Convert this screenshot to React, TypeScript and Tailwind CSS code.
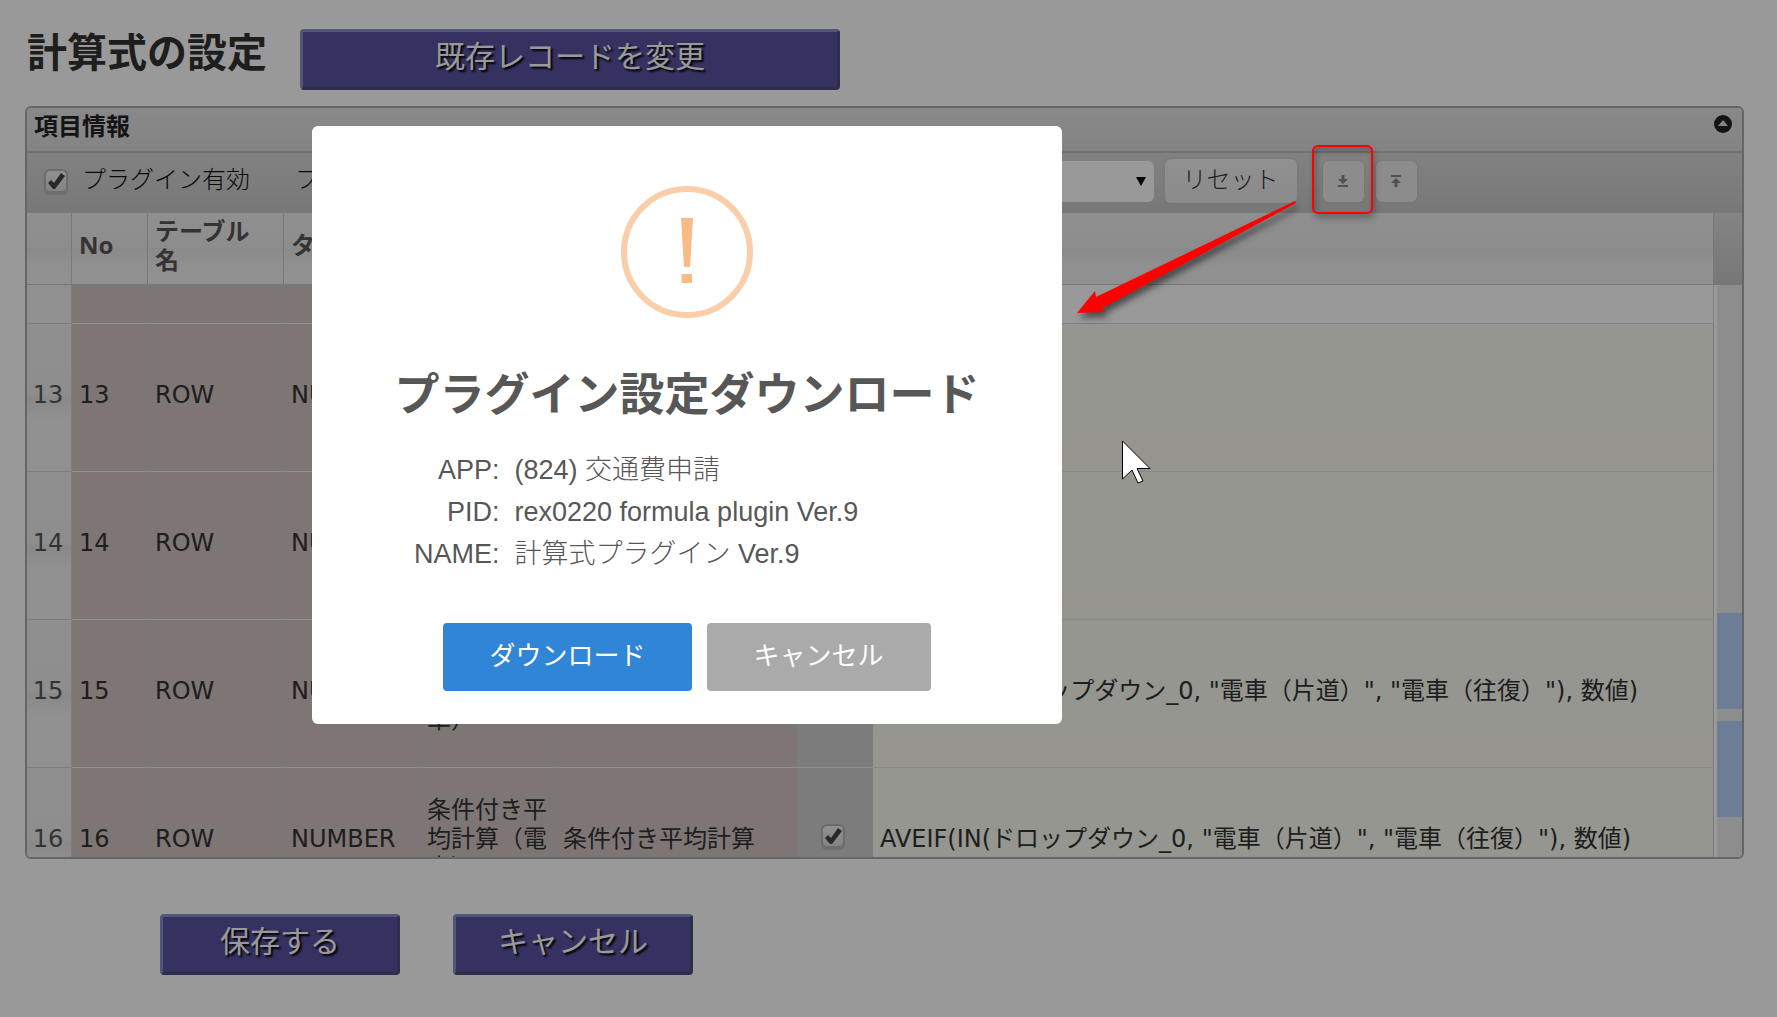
import { ReactNode } from "react";
import { clsx } from "clsx";

type Row = {
    no: number;
    table: string;
    type: string;
    name: string;
    label: string;
    formula: string;
};

const rows: Row[] = [
    { no: 13, table: "ROW", type: "NUMBER", name: "", label: "", formula: "" },
    { no: 14, table: "ROW", type: "NUMBER", name: "", label: "", formula: "" },
    {
        no: 15,
        table: "ROW",
        type: "NUMBER",
        name: "条件付き合計計算（電車）",
        label: "",
        formula: 'SUMIF(IN(ドロップダウン_0, "電車（片道）", "電車（往復）"), 数値)',
    },
    {
        no: 16,
        table: "ROW",
        type: "NUMBER",
        name: "条件付き平均計算（電車）",
        label: "条件付き平均計算",
        formula: 'AVEIF(IN(ドロップダウン_0, "電車（片道）", "電車（往復）"), 数値)',
    },
];

const columns = ["", "No", "テーブル名", "タイプ", "", "", "", ""];

const details = [
    ["APP:", "(824) 交通費申請"],
    ["PID:", "rex0220 formula plugin Ver.9"],
    ["NAME:", "計算式プラグイン Ver.9"],
];

function PrimaryButton({ children, className }: { children: ReactNode; className?: string }) {
    return (
        <button
            className={clsx(
                "h-[61px] rounded border-3 border-t-[#858fc6] border-l-[#858fc6] border-r-[#4e4e7b] border-b-[#4e4e7b] bg-[#5952a2] pb-2 text-3xl font-normal text-white [text-shadow:2px_2px_2px_#000]",
                className
            )}
        >
            {children}
        </button>
    );
}

function Check({ id, label }: { id: string; label?: string }) {
    return (
        <span className="relative block h-6 w-6">
            <input
                id={id}
                type="checkbox"
                defaultChecked
                aria-label={label}
                className="block h-6 w-6 appearance-none rounded-md border-2 border-[#b4b4b4] bg-gradient-to-b from-[#f0f0f0] to-[#dcdcdc] shadow-[0_2px_1px_#b8b8b8]"
            />
            <svg viewBox="0 0 24 24" className="pointer-events-none absolute inset-0">
                <path d="M4 14l3-3 3 3 7-10 4 3-10 13h-2z" fill="#444" />
            </svg>
        </span>
    );
}

function TransferIcon({ up }: { up?: boolean }) {
    return (
        <svg viewBox="0 0 12 14" className="h-3.5 w-3" fill="#888">
            {up ? (
                <path d="M1 1h10v2H1zM6 4l5 5H7.500v4h-3V9H1z" />
            ) : (
                <path d="M1 11h10v2H1zM6 10l5-5H7.500V1h-3v4H1z" />
            )}
        </svg>
    );
}

function Toolbar() {
    return (
        <div className="flex h-15 items-center bg-gradient-to-b from-[#d8d8d8] to-[#c8c8c8] pb-1 pl-[17px] whitespace-nowrap">
            <Check id="enabled" />
            <label htmlFor="enabled" className="ml-3.5 pb-1 text-[#111]">プラグイン有効</label>
            <label htmlFor="field" className="ml-[45px] pb-1 text-[#111]">フィールド</label>
            <div className="relative ml-4 w-[723px]">
                <select
                    id="field"
                    className="block h-[41px] w-full appearance-none rounded-md bg-white px-2"
                >
                    <option value=""></option>
                </select>
                <svg viewBox="0 0 10 9" className="pointer-events-none absolute top-4 right-2 h-[9px] w-[10px]">
                    <path d="M0 0h10L5 9z" fill="#000" />
                </svg>
            </div>
            <button className="ml-[11px] h-11 w-[132px] rounded-md bg-gradient-to-b from-[#f0f0f0] to-[#e8e8e8] pb-1 text-[#333] shadow-[0_0_3px_#bbb]">
                リセット
            </button>
            <button
                aria-label="ダウンロード"
                className="ml-[26px] grid h-[41px] w-[41px] place-items-center rounded-md bg-[#eaeaea] shadow-[0_0_3px_#bbb]"
            >
                <TransferIcon />
            </button>
            <button
                aria-label="アップロード"
                className="ml-3 grid h-[41px] w-[41px] place-items-center rounded-md bg-[#eaeaea] shadow-[0_0_3px_#bbb]"
            >
                <TransferIcon up />
            </button>
        </div>
    );
}

function Grid() {
    const pink = "border-r border-b border-r-[#ccc8c6] border-b-[#f4f0f0] bg-[#d1c5c4] px-[7px] pb-1";
    return (
        <div className="flex h-[644px] overflow-hidden">
            <table className="w-full flex-1 table-fixed border-separate border-spacing-0 text-left leading-[29px]">
                <colgroup>
                    <col className="w-[45px]" />
                    <col className="w-[76px]" />
                    <col className="w-[136px]" />
                    <col className="w-[136px]" />
                    <col className="w-[136px]" />
                    <col className="w-[241px]" />
                    <col className="w-[76px]" />
                    <col />
                </colgroup>
                <thead>
                    <tr className="h-[72px] text-[#555]">
                        {columns.map((c, i) => (
                            <th
                                key={i}
                                className="border-r border-b border-[#c8c8c8] bg-[linear-gradient(#eee,#ececec_48%,#e6e6e6_50%,#f0f0f0_75%)] pr-3 pb-2 pl-[7px] font-bold"
                            >
                                {c}
                            </th>
                        ))}
                    </tr>
                </thead>
                <tbody className="font-['DejaVu_Sans','Noto_Sans_CJK_JP',sans-serif] font-normal">
                    <tr className="h-[39px]">
                        <td className="border-r border-b border-[#d0d0d0] bg-[#f0f0f0]" />
                        <td className={pink} />
                        <td className={pink} />
                        <td className={pink} />
                        <td className={pink} />
                        <td className={pink} />
                        <td className="border-b border-[#f0f0f0] bg-[#cfcfcf]" />
                        <td className="border-r border-b border-[#d8d8e0] bg-white" />
                    </tr>
                    {rows.map((r) => (
                        <tr key={r.no} className="h-[148px]">
                            <td className="border-r border-b border-[#d0d0d0] bg-[linear-gradient(#efefef,#ececec_49%,#e4e4e4_50%,#f0f0f0_65%)] pr-0.5 pb-1 text-center text-[#555]">
                                {r.no}
                            </td>
                            <td className={pink}>{r.no}</td>
                            <td className={pink}>{r.table}</td>
                            <td className={pink}>{r.type}</td>
                            <td className={pink}>{r.name}</td>
                            <td className={pink}>{r.label}</td>
                            <td className="border-b border-[#f0f0f0] bg-[#cfcfcf] pl-6 pb-3">
                                <Check id={`row-${r.no}`} label={`${r.no}`} />
                            </td>
                            <td className="border-r border-b border-r-[#ccc] border-b-[#e4e4da] bg-[linear-gradient(#f8faef_50%,#fbf9ef)] px-[7px] pb-1 whitespace-nowrap">
                                {r.formula}
                            </td>
                        </tr>
                    ))}
                </tbody>
            </table>
            <div className="flex w-7 flex-col">
                <div className="h-[72px] bg-gradient-to-b from-[#dcdcdc] to-[#c6c6c6]" />
                <div className="ml-[3px] flex-1 bg-[#ececec] pt-[328px]">
                    <div className="h-24 bg-[#b6d0fd]" />
                    <div className="mt-3 h-24 bg-[#b6d0fd]" />
                </div>
            </div>
        </div>
    );
}

function DownloadDialog() {
    return (
        <div
            role="dialog"
            aria-labelledby="dialog-title"
            className="absolute top-[126px] left-[312px] flex w-[750px] flex-col items-center rounded-md bg-white pt-15 pb-[33px] text-[#575757]"
        >
            <svg viewBox="0 0 132 132" className="h-[132px] w-[132px]">
                <circle cx="66" cy="66" r="63" fill="none" stroke="#facea8" strokeWidth="6" />
                <path d="M60 32h12l-3 49h-6zM60.500 88h10.500v9H60.500z" fill="#f8bb86" />
            </svg>
            <h2 id="dialog-title" className="mt-[46px] text-[45px] leading-[60px] font-bold">
                プラグイン設定ダウンロード
            </h2>
            <table className="mt-[25px] mr-auto ml-[102px] font-['Liberation_Sans','Noto_Sans_CJK_JP',sans-serif] text-[27px] leading-[42px] font-light">
                <tbody>
                    {details.map(([key, value]) => (
                        <tr key={key}>
                            <th className="p-0 pr-[15px] text-right font-normal">{key}</th>
                            <td className="p-0">{value}</td>
                        </tr>
                    ))}
                </tbody>
            </table>
            <div className="mt-12 flex gap-[15px] text-[26px] font-normal text-white">
                <button className="h-[68px] rounded bg-[#3085d6] px-[46px] pb-1">ダウンロード</button>
                <button className="h-[68px] rounded bg-[#aaa] px-[47px] pb-1">キャンセル</button>
            </div>
        </div>
    );
}

// Red frame, arrow and pointer drawn above the overlay
function Callout() {
    return (
        <div className="pointer-events-none absolute inset-0">
            <div className="absolute top-[145px] left-[1312px] h-[69px] w-[61px] rounded-md border-2 border-[#f00] shadow-[2px_5px_6px_rgba(0,0,0,0.25),inset_2px_4px_6px_rgba(0,0,0,0.25)]" />
            <svg
                viewBox="0 0 230 130"
                className="absolute top-[194px] left-[1070px] h-[130px] w-[230px] overflow-visible drop-shadow-[3px_5px_3px_rgba(0,0,0,0.5)]"
            >
                <path d="M7 119L25 97L26 103L225 7L226 9L31 115L36 118Z" fill="#f00" />
            </svg>
            <svg viewBox="0 0 29 44" className="absolute top-[440px] left-[1122px] h-11 w-[29px]">
                <path d="M.5 1v38l9.500-9 6 13 5-2-6-12.500h13z" fill="#fff" stroke="#000" />
            </svg>
        </div>
    );
}

export default function App() {
    return (
        <div className="relative min-h-screen bg-white font-['Noto_Sans','Noto_Sans_CJK_JP',sans-serif] text-2xl font-light text-[#333]">
            <header className="flex pt-[29px] pl-[27px]">
                <h1 className="w-[273px] text-[40px] leading-[46px] font-bold">計算式の設定</h1>
                <PrimaryButton className="w-[540px]">既存レコードを変更</PrimaryButton>
            </header>
            <section className="mt-4 mr-[33px] ml-[25px] overflow-hidden rounded-md border-2 border-[#aaa]">
                <div className="flex h-[45px] items-start justify-between border-b-2 border-[#bbb] bg-gradient-to-b from-[#e4e4e4] to-[#dcdcdc] pr-2.5 pl-[7px]">
                    <h2 className="leading-9 font-bold text-[#222]">項目情報</h2>
                    <button aria-label="折りたたむ" className="mt-[7px]">
                        <svg viewBox="0 0 18 18" className="h-[18px] w-[18px]">
                            <circle cx="9" cy="9" r="9" fill="#222" />
                            <path d="M9 5l5 6H4z" fill="#ddd" />
                        </svg>
                    </button>
                </div>
                <Toolbar />
                <Grid />
            </section>
            <footer className="mt-[55px] flex gap-[53px] pl-40">
                <PrimaryButton className="w-60">保存する</PrimaryButton>
                <PrimaryButton className="w-60">キャンセル</PrimaryButton>
            </footer>
            <div className="absolute inset-0 bg-black/40" />
            <DownloadDialog />
            <Callout />
        </div>
    );
}
